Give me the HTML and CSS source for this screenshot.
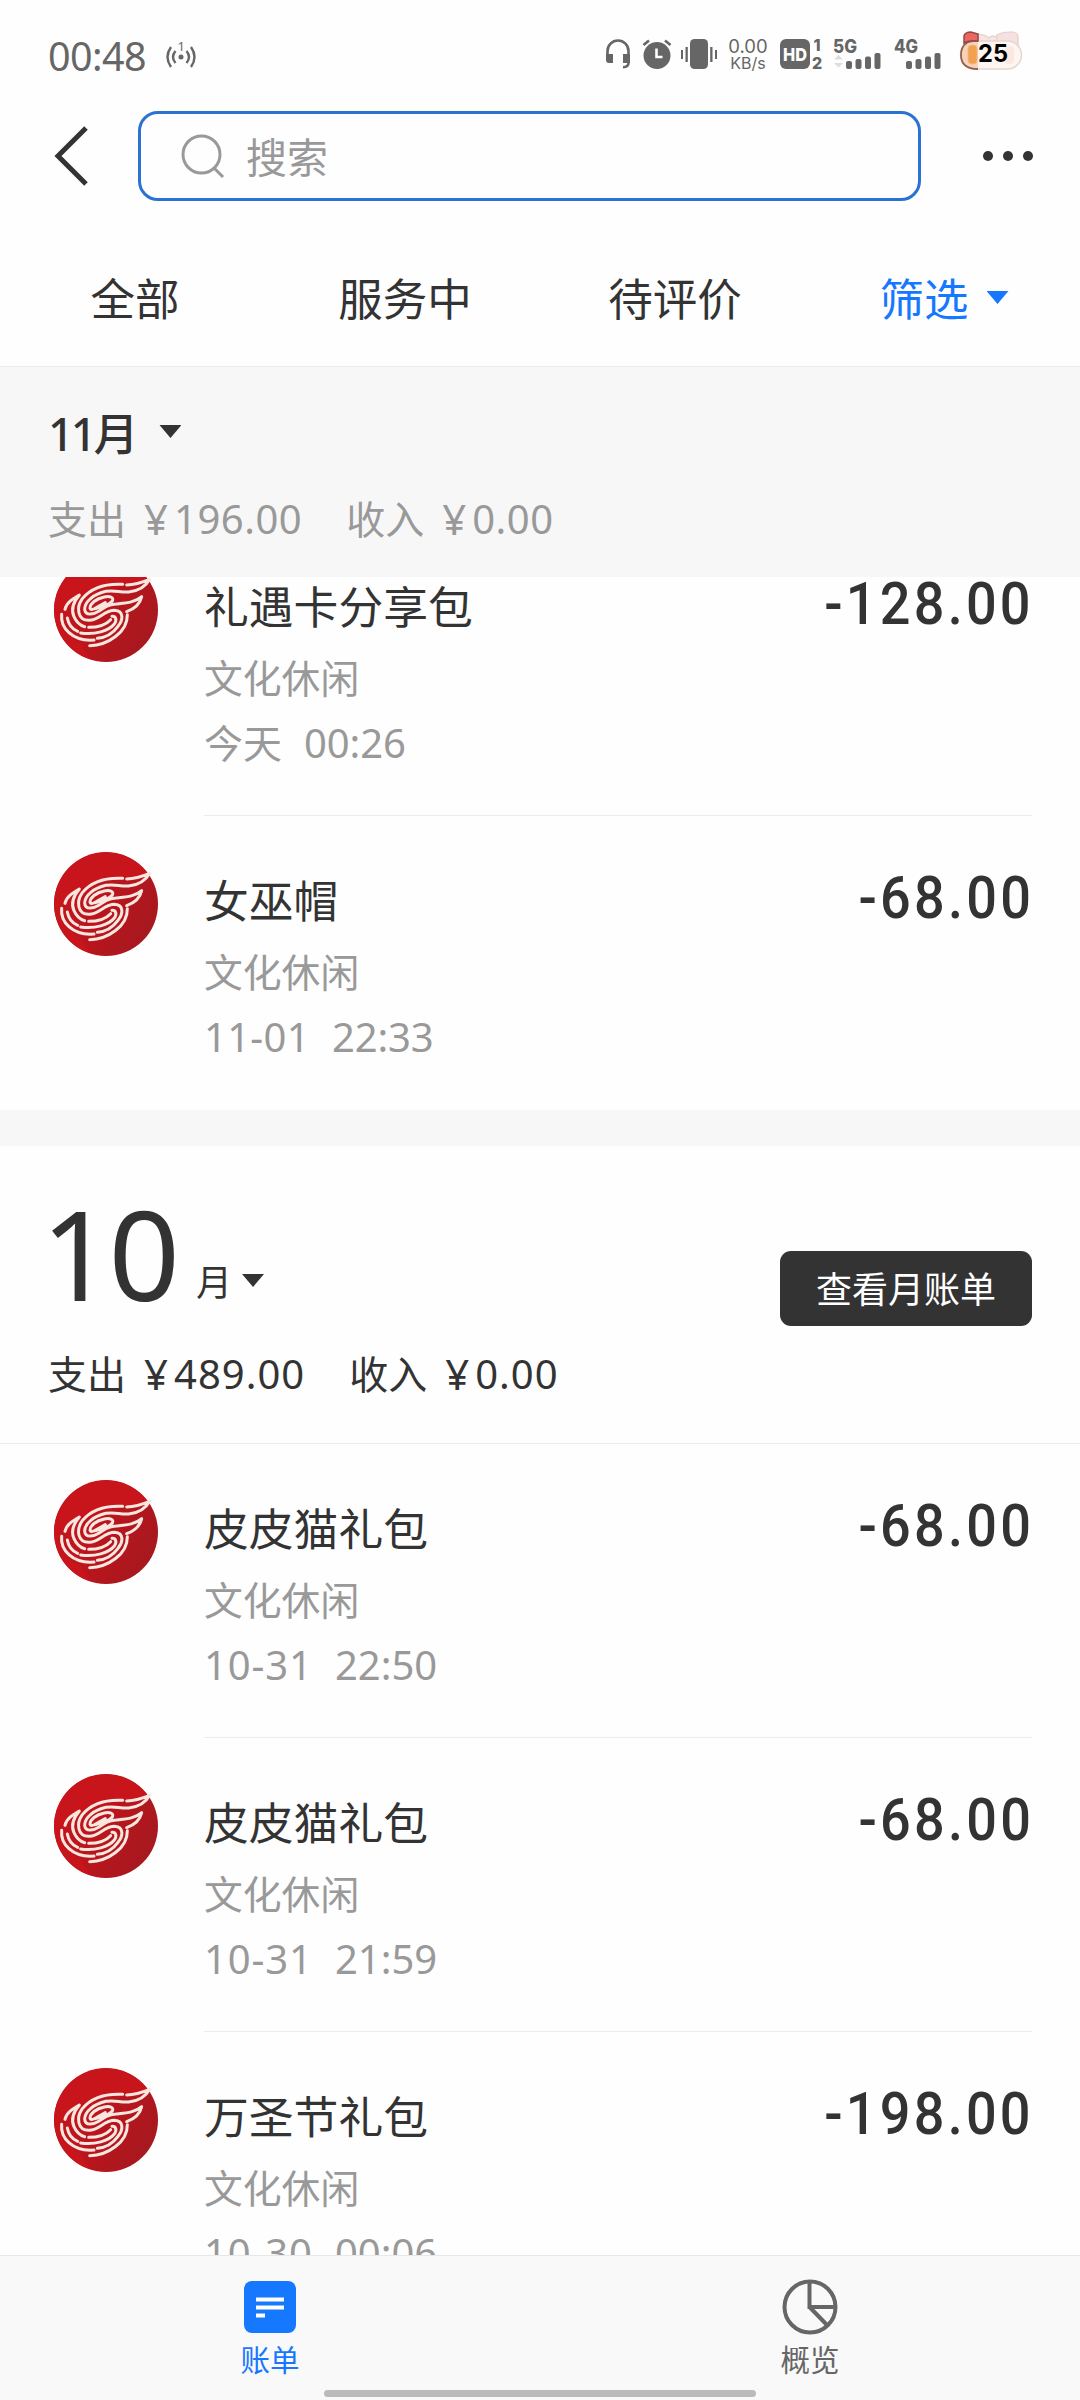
FILE: index.html
```html
<!DOCTYPE html>
<html lang="zh-CN">
<head>
<meta charset="utf-8">
<title>账单</title>
<link rel="stylesheet" href="styles.css">
</head>
<body>
<svg class="defs" width="0" height="0" aria-hidden="true">
  <defs>
    <linearGradient id="red" x1="0" y1="0.2" x2="1" y2="0.7"><stop offset="0" stop-color="#c8141b"/><stop offset="0.55" stop-color="#b9151d"/><stop offset="1" stop-color="#a5191f"/></linearGradient>
    <symbol id="logo" viewBox="42 36 312 312">
      <circle cx="198" cy="192" r="156" fill="url(#red)"/>
      <path d="M42 192A156 156 0 0 1 330 110C270 116 215 108 160 128C120 146 80 160 62 215C60 250 80 275 120 290L150 340A156 156 0 0 1 42 192Z" fill="#c8141b"/>
      <g fill="none" stroke="#f8e6df" stroke-width="9" stroke-linecap="round" stroke-linejoin="round">
        <path d="M248 115C190 112 150 130 127 158C108 185 112 224 148 223C178 222 192 193 224 193C252 195 250 222 234 241C218 263 195 275 172 277"/>
        <path d="M260 117C290 116 312 107 329 100C314 127 290 136 266 138C240 140 225 131 198 136C162 144 134 166 134 190C136 210 160 206 176 196C192 184 205 175 228 174C256 171 285 170 305 152C300 175 285 188 260 197"/>
        <path d="M164 188C180 185 205 180 217 165C223 153 208 150 193 153C168 158 150 173 150 187C152 193 158 190 164 188L196 170"/>
        <path d="M75 190C79 170 96 160 118 147C100 168 92 190 102 212C110 230 121 239 134 242"/>
        <path d="M65 205C61 244 95 287 162 282"/>
        <path d="M82 216C86 238 98 250 113 256"/>
        <path d="M146 244C177 244 200 234 212 221"/>
        <path d="M122 261C165 267 206 255 223 234C232 221 227 210 216 211"/>
        <path d="M149 299C204 298 263 258 262 206"/>
      </g>
    </symbol>
  </defs>
</svg>
<div class="app">
  <div class="status">
    <span class="clock">00:48</span>
    <svg class="s-beacon" viewBox="0 0 32 30" width="32" height="30" fill="none" stroke="#666" stroke-width="2.4">
      <path d="M6 7Q-1 17 6 27M26 7Q33 17 26 27M10.500 11Q5.500 17 10.500 23M21.500 11Q26.500 17 21.500 23"/><circle cx="16" cy="17" r="2.500" fill="#666" stroke="none"/><text x="12.500" y="11" fill="#666" stroke="none" font-family="Noto Sans, sans-serif" font-size="13">1</text>
    </svg>
    <svg class="s-head" width="24" height="30" viewBox="0 0 24 30"><path d="M1.500 16V12A10.500 10.500 0 0 1 22.500 12V24Q22.500 28 17 28.200" fill="none" stroke="#666" stroke-width="2.600"/><path d="M0 15H7V24H3Q0 24 0 21ZM17 15H24V24H17Z" fill="#666"/></svg>
    <svg class="s-alarm" width="30" height="30" viewBox="0 0 30 30"><circle cx="15" cy="16.500" r="13.500" fill="#666"/><path d="M1.500 6L7 1.500M28.500 6L23 1.500" stroke="#666" stroke-width="2.600"/><path d="M14.500 9.500V18H20.500" fill="none" stroke="#fff" stroke-width="2.600"/></svg>
    <svg class="s-vib" width="36" height="30" viewBox="0 0 36 30" fill="#666"><rect x="9" width="18" height="30" rx="4.500"/><path d="M0 11h2v9H0zM4.500 8h2.300v15H4.500zM29.200 8h2.300v15h-2.300zM34 11h2v9h-2z"/></svg>
    <span class="speed"><span>0.00</span><span class="unit">KB/s</span></span>
    <svg class="s-hd" width="44" height="32" viewBox="0 0 44 32"><rect width="30" height="30" rx="6" fill="#666"/><text x="3" y="21.500" fill="#fff" font-family="Inter, sans-serif" font-weight="800" font-size="18" textLength="24" lengthAdjust="spacingAndGlyphs">HD</text><g fill="#666" font-family="Inter, sans-serif" font-weight="800" font-size="16"><text x="33.500" y="11.500">1</text><text x="32" y="29.500">2</text></g></svg>
    <svg class="s-net" width="50" height="32" viewBox="0 0 50 32" fill="#666"><text x="0" y="14" font-family="Inter, sans-serif" font-weight="800" font-size="18.500" textLength="24" lengthAdjust="spacingAndGlyphs">5G</text><path d="M1 20.500L5.500 16L10 20.500ZM1 24L5.500 28.500L10 24Z" fill="#ddd"/><rect x="13" y="22" width="6" height="8" rx="2"/><rect x="22.500" y="20" width="6" height="10" rx="2"/><rect x="32" y="17.500" width="6" height="12.500" rx="2"/><rect x="41.500" y="14" width="6" height="16" rx="2"/></svg>
    <svg class="s-net2" width="50" height="32" viewBox="0 0 50 32" fill="#666"><text x="0" y="14" font-family="Inter, sans-serif" font-weight="800" font-size="18.500" textLength="24" lengthAdjust="spacingAndGlyphs">4G</text><rect x="12" y="22" width="6" height="8" rx="2"/><rect x="21.500" y="20" width="6" height="10" rx="2"/><rect x="31" y="17.500" width="6" height="12.500" rx="2"/><rect x="40.500" y="14" width="6" height="16" rx="2"/></svg>
    <svg class="s-batt" width="64" height="40" viewBox="0 0 64 40">
      <g stroke="#e8d5ce" stroke-width="1.500"><path d="M38 4Q44 1 50 1Q60 0 59 8V14H36Z" fill="#f5e0e2"/><path d="M19 3Q27 4 30 7Q34 3 38 7V14H19Z" fill="#f8e4e2"/><rect x="1.500" y="10" width="61" height="28" rx="14" fill="#fdf5f1"/></g>
      <rect x="46" y="15" width="9" height="18" rx="4" fill="#fbe9df"/>
      <path d="M19 10H16Q2 10 2 24Q2 38 19 38Z" fill="#f6d3b8"/><path d="M19 10Q2 9 2 24Q2 38 19 38" fill="none" stroke="#8f6250" stroke-width="1.800"/>
      <path d="M5 12V5Q6 1 12 1L19 3V10Q10 9 5 12Z" fill="#ee6460" stroke="#8f4a42" stroke-width="1.500"/><rect x="9" y="14" width="9" height="19" rx="4" fill="#f3a14c" stroke="#eeb487"/>
      <text x="19" y="31" font-family="Inter, sans-serif" font-size="24.500" font-weight="700" fill="#000" textLength="30" lengthAdjust="spacingAndGlyphs">25</text>
    </svg>
  </div>

  <header class="header">
    <svg class="back" width="34" height="58" viewBox="0 0 34 58"><path d="M31 1L3 29L31 57" fill="none" stroke="#333" stroke-width="5"/></svg>
    <div class="search">
      <svg width="44" height="46" viewBox="0 0 44 46" fill="none" stroke="#999" stroke-width="3"><circle cx="20.500" cy="21.500" r="18.500"/><path d="M33 35L42 44"/></svg>
      <span>搜索</span>
    </div>
    <div class="more"><i></i><i></i><i></i></div>
  </header>

  <nav class="tabs">
    <span class="tab">全部</span><span class="tab">服务中</span><span class="tab">待评价</span><span class="tab active">筛选<i class="tri"></i></span>
  </nav>

  <section class="sticky">
    <div class="month">11月<i class="tri"></i></div>
    <div class="sum"><span class="cn">支出</span><span class="yen">¥</span><span class="n">196.00</span><span class="cn inc">收入</span><span class="yen">¥</span><span class="n">0.00</span></div>
  </section>

  <main class="list">
    <div class="scrolled">
      <article class="item">
        <svg class="avatar"><use href="#logo"/></svg>
        <div class="body"><div class="info"><div class="title">礼遇卡分享包</div><div class="cat">文化休闲</div><div class="date"><span class="today">今天</span><span class="time">00:26</span></div></div><div class="amt">-128.00</div></div>
      </article>
      <article class="item last">
        <svg class="avatar"><use href="#logo"/></svg>
        <div class="body"><div class="info"><div class="title">女巫帽</div><div class="cat">文化休闲</div><div class="date">11-01<span class="time">22:33</span></div></div><div class="amt">-68.00</div></div>
      </article>
      <div class="gap"></div>
      <section class="monthhead">
        <div class="big"><span class="num">10</span><span class="yue">月</span><i class="tri"></i><span class="btn">查看月账单</span></div>
        <div class="sum"><span class="cn">支出</span><span class="yen">¥</span><span class="n">489.00</span><span class="cn inc">收入</span><span class="yen">¥</span><span class="n">0.00</span></div>
      </section>
      <article class="item oct">
        <svg class="avatar"><use href="#logo"/></svg>
        <div class="body"><div class="info"><div class="title">皮皮猫礼包</div><div class="cat">文化休闲</div><div class="date">10-31<span class="time">22:50</span></div></div><div class="amt">-68.00</div></div>
      </article>
      <article class="item oct">
        <svg class="avatar"><use href="#logo"/></svg>
        <div class="body"><div class="info"><div class="title">皮皮猫礼包</div><div class="cat">文化休闲</div><div class="date">10-31<span class="time">21:59</span></div></div><div class="amt">-68.00</div></div>
      </article>
      <article class="item oct">
        <svg class="avatar"><use href="#logo"/></svg>
        <div class="body"><div class="info"><div class="title">万圣节礼包</div><div class="cat">文化休闲</div><div class="date">10-30<span class="time">00:06</span></div></div><div class="amt">-198.00</div></div>
      </article>
    </div>
  </main>

  <footer class="bottom">
    <div class="bt on"><svg width="54" height="54" viewBox="0 0 54 54"><rect x="1" y="1" width="52" height="52" rx="8" fill="#1677ff"/><path d="M13 19.500H41M13 27.500H41M13 35.500H22" stroke="#fff" stroke-width="4.200"/></svg><span>账单</span></div>
    <div class="bt"><svg width="56" height="56" viewBox="0 0 56 56" fill="none" stroke="#666" stroke-width="4"><circle cx="28" cy="28" r="25.500"/><path d="M27.500 3V28H53M27.500 28L45 46"/></svg><span>概览</span></div>
    <div class="home"></div>
  </footer>
</div>
</body>
</html>
```
FILE: styles.css
```css
* { box-sizing: border-box; }
body { margin: 0; background: #fff; color: #333; font-family: "Noto Sans", "Noto Sans CJK SC", sans-serif; }
svg { display: block; flex: none; overflow: visible; }
.defs { position: absolute; }
.app { width: 1080px; height: 2400px; display: flex; flex-direction: column; overflow: hidden; background: #fefefe; }

.status { height: 111px; flex: none; display: flex; align-items: flex-start; padding: 39px 0 0 48px; color: #666; }
.clock { font-size: 39.5px; line-height: 34px; width: 117px; white-space: nowrap; letter-spacing: -.6px; }
.s-beacon { margin-top: 1px; }
.s-head { margin-left: 409px; }
.s-alarm { margin-left: 12px; }
.s-vib { margin-left: 9px; }
.speed { width: 40px; margin: -1px -1px 0 11px; display: flex; flex-direction: column; align-items: center; font-size: 18.5px; line-height: 17px; font-family: Inter, sans-serif; }
.speed .unit { font-size: 16px; line-height: 17px; }
.s-hd { margin-left: 13px; }
.s-net { margin-left: 9px; }
.s-net2 { margin-left: 11px; }
.s-batt { margin: -8px 0 0 15px; }

.header { height: 90px; flex: none; display: flex; align-items: center; padding-left: 55px; }
.search { width: 783px; height: 90px; margin-left: 49px; border: 3px solid #2b73d2; border-radius: 20px; display: flex; align-items: center; padding-left: 40px; color: #999; font-size: 41px; }
.search span { margin-left: 21px; line-height: 50px; padding-top: 1px; }
.more { margin-left: 62px; display: flex; gap: 10px; }
.more i { width: 10px; height: 10px; border-radius: 50%; background: #333; }

.tri { display: inline-block; width: 22px; height: 13px; background: currentColor; clip-path: polygon(0 0, 100% 0, 50% 100%); }
.tabs { height: 166px; flex: none; display: grid; grid-template-columns: repeat(4, 270px); border-bottom: 1px solid #ebebeb; }
.tab { display: flex; align-items: center; justify-content: center; font-size: 44.5px; line-height: 64px; padding-top: 30px; }
.tab .tri { margin: 0 0 2px 18px; }
.active { color: #1677ff; padding-right: 2px; }

.sticky { height: 210px; flex: none; background: #f7f7f7; padding: 35px 48px 0; color: #999; }
.month { height: 58px; display: flex; align-items: center; color: #333; font-size: 45px; font-weight: 500; letter-spacing: -3px; }
.month .tri { margin: 1px 0 0 24px; }
.sum { display: flex; align-items: center; font-size: 40px; line-height: 56px; }
.sum .cn { font-size: 39px; }
.sticky .sum { margin-top: 31px; }
.sum .yen { margin-left: 15px; width: 30px; text-align: center; font-size: 42px; }
.sum .n { margin-left: 3px; letter-spacing: .5px; }
.sum .inc { margin-left: 44px; }

.list { height: 1678px; flex: none; overflow: hidden; }
.scrolled { margin-top: -55px; }
.item { height: 294px; display: flex; padding: 36px 48px 0 54px; }
.avatar { width: 104px; height: 104px; }
.body { flex: 1; margin-left: 46px; height: 258px; display: flex; justify-content: space-between; border-bottom: 1px solid #ebebeb; }
.last .body { border-bottom: 0; }
.title { font-size: 44.8px; line-height: 64px; margin-top: 17px; }
.cat { font-size: 38.8px; line-height: 56px; margin-top: 10.5px; color: #999; }
.date { font-size: 40px; line-height: 56px; margin-top: 9px; color: #999; letter-spacing: .3px; }
.today { font-size: 39px; letter-spacing: 0; }
.time { margin-left: 22px; letter-spacing: -.1px; }
.oct .date { letter-spacing: .9px; }
.oct .time { letter-spacing: 0; }
.amt { font-family: Roboto, sans-serif; font-weight: 500; font-size: 60px; line-height: 70px; letter-spacing: 3.6px; margin: 11px -2px 0 0; transform: scaleX(.9); transform-origin: right; }
.gap { height: 36px; background: #f7f7f7; }
.monthhead { height: 298px; padding: 45px 48px 0; border-bottom: 1px solid #ebebeb; }
.big { height: 135px; display: flex; align-items: flex-end; }
.num { font-size: 125px; line-height: 135px; letter-spacing: -4px; margin: 0 0 6px -7px; }
.yue { font-size: 36px; line-height: 52px; margin-left: 20px; margin-bottom: 17px; }
.big .tri { margin: 0 0 39px 10px; }
.btn { margin-left: auto; width: 252px; height: 75px; border-radius: 11px; background: #333; color: #fff; font-size: 36px; line-height: 77px; text-align: center; }
.monthhead .sum { margin-top: 20px; }
.monthhead .n { letter-spacing: 1px; }

.bottom { position: relative; height: 145px; flex: none; display: grid; grid-template-columns: 1fr 1fr; background: #f9f9f9; border-top: 1px solid #e8e8e8; }
.bt { display: flex; flex-direction: column; align-items: center; padding-top: 23px; color: #666; font-size: 29.5px; }
.bt svg { height: 56px; }
.bt span { line-height: 40px; margin-top: 5px; }
.bt.on { color: #1677ff; }
.home { position: absolute; left: 324px; bottom: 3px; width: 432px; height: 7px; border-radius: 4px; background: #bbb; }
```
